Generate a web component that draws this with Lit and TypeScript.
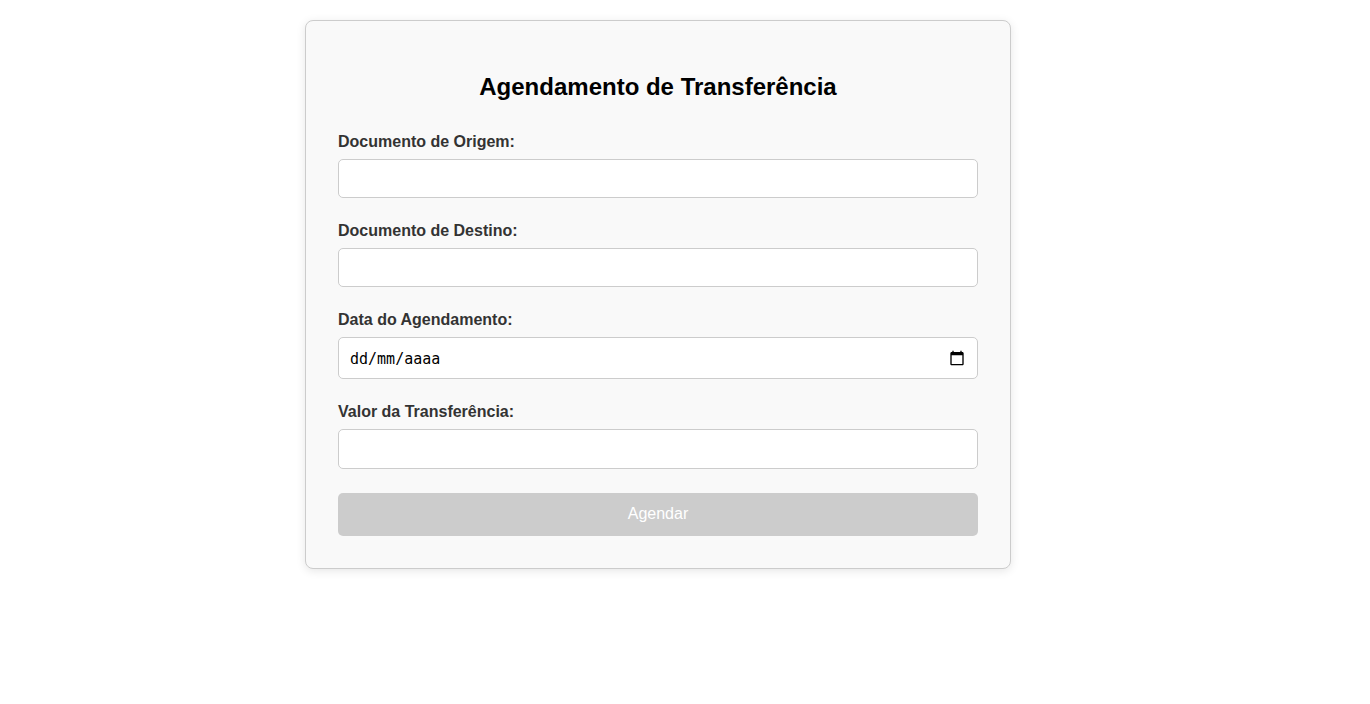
import { LitElement, html, css } from "lit";
import { customElement } from "lit/decorators.js";

@customElement("app-root")
export class AppRoot extends LitElement {
  static styles = css`
    :host {
      display: block;
      padding: 20px 54px 20px 0;
      font-family: Arial, "Liberation Sans", sans-serif;
      font-size: 16px;
      line-height: 18px;
    }
    *,
    *::before,
    *::after {
      box-sizing: border-box;
    }
    .card {
      max-width: 706px;
      margin: 0 auto;
      padding: 32px;
      border: 1px solid #ccc;
      border-radius: 8px;
      background: #f9f9f9;
      box-shadow: 0 2px 10px rgba(0, 0, 0, 0.1);
    }
    .title {
      margin: 20px 0 32px;
      font-size: 24px;
      line-height: 28px;
      text-align: center;
      color: #000;
    }
    .form {
      display: flex;
      flex-direction: column;
      gap: 24px;
    }
    .field {
      display: flex;
      flex-direction: column;
      gap: 8px;
    }
    .label {
      font-weight: bold;
      color: #333;
    }
    .control {
      width: 100%;
      height: 39px;
      padding: 10px;
      border: 1px solid #ccc;
      border-radius: 5px;
      background: #fff;
      font: inherit;
      color: #000;
    }
    .control.amount {
      height: 40px;
      appearance: textfield;
    }
    .control.date {
      display: flex;
      align-items: center;
      height: 42px;
    }
    .date-text {
      flex: 1;
      min-width: 0;
      padding: 2px 0 0 1px;
      border: 0;
      outline: 0;
      background: transparent;
      font: 15px/18px Consolas, "DejaVu Sans Mono", monospace;
      color: #000;
    }
    .date-text::placeholder {
      color: #000;
      opacity: 1;
    }
    .picker {
      display: flex;
      padding: 0 2px;
      border: 0;
      background: none;
      color: #000;
      cursor: pointer;
    }
    .picker-icon {
      width: 16px;
      height: 16px;
      fill: currentColor;
    }
    .submit {
      padding: 12px 12px 13px;
      border: 0;
      border-radius: 5px;
      background: #ccc;
      color: #fff;
      font: inherit;
      line-height: 18px;
    }
  `;

  render() {
    return html`
      <main class="card">
        <h2 class="title">Agendamento de Transferência</h2>
        <form class="form">
          <div class="field">
            <label class="label" for="origem">Documento de Origem:</label>
            <input class="control" id="origem" type="text" />
          </div>
          <div class="field">
            <label class="label" for="destino">Documento de Destino:</label>
            <input class="control" id="destino" type="text" />
          </div>
          <div class="field">
            <label class="label" for="data">Data do Agendamento:</label>
            <div class="control date">
              <input class="date-text" id="data" type="text" inputmode="numeric" placeholder="dd/mm/aaaa" />
              <button class="picker" type="button" aria-label="Abrir calendário">
                <svg class="picker-icon" viewBox="0 0 24 24" aria-hidden="true">
                  <path d="M20 3h-1V1h-2v2H7V1H5v2H4c-1.1 0-2 .9-2 2v16c0 1.1.9 2 2 2h16c1.1 0 2-.9 2-2V5c0-1.1-.9-2-2-2zm0 18H4V8h16v13z" />
                </svg>
              </button>
            </div>
          </div>
          <div class="field">
            <label class="label" for="valor">Valor da Transferência:</label>
            <input class="control amount" id="valor" type="number" />
          </div>
          <button class="submit" type="submit" disabled>Agendar</button>
        </form>
      </main>
    `;
  }
}
